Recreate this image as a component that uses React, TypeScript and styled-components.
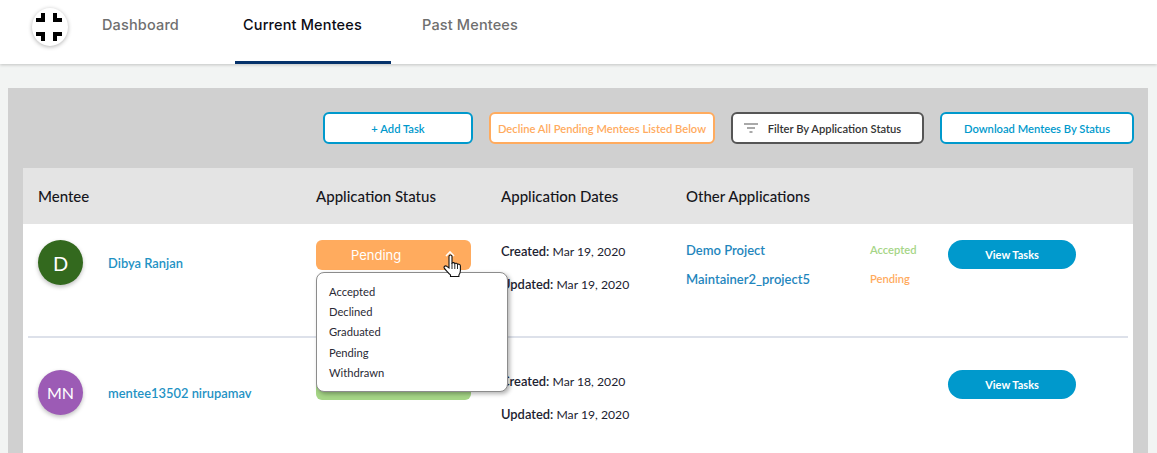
import React from 'react'
import styled, { createGlobalStyle } from 'styled-components'

const GlobalStyle = createGlobalStyle`
  html, body {
    margin: 0;
    height: 453px;
    overflow: hidden;
    background: #f2f4f3;
    font-family: "Lato", "Liberation Sans", sans-serif;
  }
`

const BLUE = '#0099cc'
const ORANGE = '#ffab5e'
const GREEN = '#a5d586'

const NavBar = styled.nav`
  height: 64px;
  padding-left: 32px;
  display: flex;
  align-items: stretch;
  background: #fff;
  box-shadow: 0 1px 3px rgba(0, 0, 0, 0.2);
`

const Logo = styled.div`
  align-self: flex-start;
  margin: 8px 26px 0 0;
  width: 36px;
  height: 38px;
  border-radius: 50%;
  background: #fff;
  box-shadow: 0 1px 4px rgba(0, 0, 0, 0.3);
  svg {
    display: block;
  }
`

const Tab = styled.a<{ $active?: boolean; $width: number }>`
  box-sizing: border-box;
  width: ${p => p.$width}px;
  margin-right: 23px;
  padding: 16px 0 0 8px;
  font-family: "Inter", sans-serif;
  font-size: 14.5px;
  font-weight: 500;
  letter-spacing: 0.15px;
  color: ${p => (p.$active ? '#0b0b14' : '#6f6f6f')};
  border-bottom: 3px solid ${p => (p.$active ? '#06326b' : 'transparent')};
`

const Panel = styled.main`
  margin: 24px 9px 0 8px;
  padding: 24px 15px 0;
  background: #d0d0d0;
`

const Toolbar = styled.div`
  display: flex;
  justify-content: flex-end;
  gap: 16px;
  margin-right: -1px;
  margin-bottom: 24px;
`

const ActionButton = styled.button<{ $color: string; $width: number; $text?: string; $shift?: number }>`
  box-sizing: border-box;
  width: ${p => p.$width}px;
  height: 32px;
  display: flex;
  align-items: center;
  justify-content: center;
  gap: 10px;
  padding: 0 ${p => p.$shift || 0}px 0 0;
  background: #fff;
  border: 2px solid ${p => p.$color};
  border-radius: 6px;
  font-family: inherit;
  font-size: 11.2px;
  font-weight: 600;
  white-space: nowrap;
  color: ${p => p.$text || p.$color};
`

const Table = styled.section`
  background: #fff;
  position: relative;
`

const Columns = `
  display: grid;
  grid-template-columns: 278px 185px 185px 184px 78px 1fr;
`

const HeaderRow = styled.div`
  ${Columns}
  height: 56px;
  padding-left: 15px;
  align-items: center;
  background: #e4e4e4;
  font-size: 15px;
  font-weight: 500;
  color: #16161c;
`

const Row = styled.div<{ $top: number; $height: number; $divider?: boolean }>`
  ${Columns}
  box-sizing: border-box;
  height: ${p => p.$height}px;
  margin: 0 5px;
  padding: ${p => p.$top}px 0 0 10px;
  align-items: start;
  border-bottom: ${p => (p.$divider ? '2px solid #dde1ea' : 'none')};
`

const Mentee = styled.div`
  display: flex;
  align-items: center;
  gap: 25px;
`

const Avatar = styled.div<{ $color: string; $size: number }>`
  width: 45px;
  height: 45px;
  border-radius: 50%;
  display: flex;
  align-items: center;
  justify-content: center;
  background: ${p => p.$color};
  box-shadow: 0 2px 4px rgba(0, 0, 0, 0.25);
  color: #fff;
  font-size: ${p => p.$size}px;
`

const NameLink = styled.a`
  font-size: 12.9px;
  font-weight: 600;
  color: #1f92c4;
`

const StatusWrap = styled.div`
  position: relative;
`

const StatusPill = styled.div<{ $color: string }>`
  box-sizing: border-box;
  width: 155px;
  height: 30px;
  padding-left: 35px;
  display: flex;
  align-items: center;
  background: ${p => p.$color};
  border-radius: 6px;
  font-family: "Inter", sans-serif;
  font-size: 13px;
  color: #fff;
  svg {
    margin-left: 44px;
    margin-top: -3px;
  }
`

const Dropdown = styled.ul`
  position: absolute;
  z-index: 2;
  top: 32px;
  left: 0;
  box-sizing: border-box;
  width: 192px;
  height: 120px;
  margin: 0;
  padding: 9px 12px;
  list-style: none;
  background: #fff;
  border: 1px solid #8c8c8c;
  border-radius: 8px;
  box-shadow: 2px 2px 4px rgba(0, 0, 0, 0.3);
`

const DropdownItem = styled.li`
  height: 20.2px;
  line-height: 20px;
  font-size: 11.2px;
  color: #2a2a35;
`

const Cursor = styled.svg`
  position: absolute;
  z-index: 3;
  left: 127px;
  top: 14px;
`

const Dates = styled.div`
  display: flex;
  flex-direction: column;
  gap: 16px;
  padding-top: 3px;
  font-size: 12.2px;
  line-height: 17px;
  color: #1c2230;
  b {
    font-weight: 600;
    font-size: 12.9px;
  }
`

const Stack = styled.div<{ $top: number }>`
  display: flex;
  flex-direction: column;
  gap: 12px;
  padding-top: ${p => p.$top}px;
`

const ProjectLink = styled.a`
  font-size: 13px;
  line-height: 17px;
  font-weight: 600;
  color: #1f86bd;
`

const AppState = styled.span<{ $color: string }>`
  font-size: 11.2px;
  line-height: 17px;
  font-weight: 600;
  color: ${p => p.$color};
`

const ViewButton = styled.button`
  width: 128px;
  height: 29px;
  padding: 0;
  border: none;
  border-radius: 15px;
  background: ${BLUE};
  font-family: inherit;
  font-size: 11px;
  font-weight: 700;
  color: #fff;
`

const STATUSES = ['Accepted', 'Declined', 'Graduated', 'Pending', 'Withdrawn']

const LogoMark = () => (
  <svg width="36" height="38" viewBox="0 0 36 38" fill="#000">
    <path d="M9 5H13V14H4V10H9z" />
    <path d="M21 5h4v5H30V14H21z" />
    <path d="M4 24H13V33H9V28H4z" />
    <path d="M21 24h9v4h-5V33H21z" />
  </svg>
)

const FilterIcon = () => (
  <svg width="14" height="10" viewBox="0 0 14 10" stroke="#555" strokeWidth="1.2">
    <path d="M0 1h14M3 5h8M5.5 9h3" />
  </svg>
)

const App = () => (
  <>
    <GlobalStyle />
    <NavBar>
      <Logo>
        <LogoMark />
      </Logo>
      <Tab $width={118}>Dashboard</Tab>
      <Tab $width={156} $active>Current Mentees</Tab>
      <Tab $width={120}>Past Mentees</Tab>
    </NavBar>
    <Panel>
      <Toolbar>
        <ActionButton $color={BLUE} $width={150}>+ Add Task</ActionButton>
        <ActionButton $color={ORANGE} $width={226}>Decline All Pending Mentees Listed Below</ActionButton>
        <ActionButton $color="#555" $text="#333" $width={193} $shift={10}>
          <FilterIcon />
          Filter By Application Status
        </ActionButton>
        <ActionButton $color={BLUE} $width={194}>Download Mentees By Status</ActionButton>
      </Toolbar>
      <Table>
        <HeaderRow>
          <span>Mentee</span>
          <span>Application Status</span>
          <span>Application Dates</span>
          <span>Other Applications</span>
        </HeaderRow>
        <Row $top={16} $height={114} $divider>
          <Mentee>
            <Avatar $color="#33691e" $size={20}>D</Avatar>
            <NameLink>Dibya Ranjan</NameLink>
          </Mentee>
          <StatusWrap>
            <StatusPill $color={ORANGE}>
              Pending
              <svg width="10" height="6" viewBox="0 0 10 6" fill="none" stroke="#fff" strokeWidth="1.6">
                <path d="M1 5l4-4 4 4" />
              </svg>
            </StatusPill>
            <Cursor width="18" height="24" viewBox="0 0 18 24">
              <path
                d="M6 2.5c0-2 3-2 3 0V9c1-.7 2.4-.5 2.8.5 1-.6 2.3-.3 2.7.7 1.3-.4 2.9.3 2.9 1.8v4.5c0 2-.6 3.3-1.5 4.5v1.5H7.5v-1.6C5.5 19.3 3.4 16.5 1.5 14.5c-1.3-1.8.8-3.5 2.4-2.1L6 14z"
                fill="#fff"
                stroke="#111"
                strokeWidth="1.1"
              />
              <path d="M9 9v6M11.8 9.5V15M14.5 10.2V15" stroke="#111" strokeWidth="0.9" fill="none" />
            </Cursor>
            <Dropdown>
              {STATUSES.map(s => (
                <DropdownItem key={s}>{s}</DropdownItem>
              ))}
            </Dropdown>
          </StatusWrap>
          <Dates>
            <span><b>Created:</b> Mar 19, 2020</span>
            <span><b>Updated:</b> Mar 19, 2020</span>
          </Dates>
          <Stack $top={2}>
            <ProjectLink>Demo Project</ProjectLink>
            <ProjectLink>Maintainer2_project5</ProjectLink>
          </Stack>
          <Stack $top={1}>
            <AppState $color={GREEN}>Accepted</AppState>
            <AppState $color={ORANGE}>Pending</AppState>
          </Stack>
          <ViewButton>View Tasks</ViewButton>
        </Row>
        <Row $top={32} $height={115}>
          <Mentee>
            <Avatar $color="#9c5bb5" $size={16}>MN</Avatar>
            <NameLink>mentee13502 nirupamav</NameLink>
          </Mentee>
          <StatusWrap>
            <StatusPill $color={GREEN} />
          </StatusWrap>
          <Dates>
            <span><b>Created:</b> Mar 18, 2020</span>
            <span><b>Updated:</b> Mar 19, 2020</span>
          </Dates>
          <span />
          <span />
          <ViewButton>View Tasks</ViewButton>
        </Row>
      </Table>
    </Panel>
  </>
)

export default App
